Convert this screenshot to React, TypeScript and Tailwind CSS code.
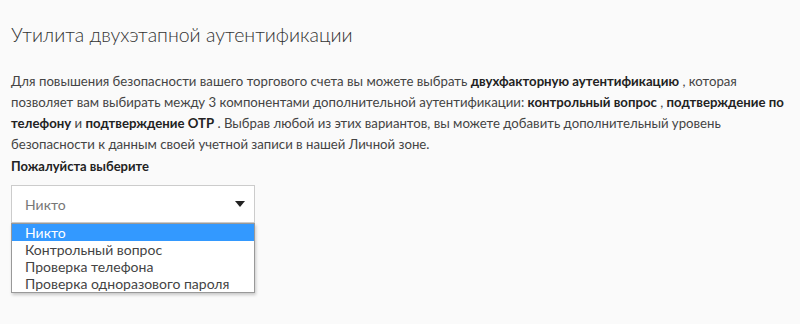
import { useState } from "react";

const options = [
  "Никто",
  "Контрольный вопрос",
  "Проверка телефона",
  "Проверка одноразового пароля",
];

export default function App() {
  const [selected, setSelected] = useState(0);

  return (
    <div className="min-h-[324px] w-[800px] bg-[#fafafa] pl-[11px] pr-[6px] pt-[22px] font-['Lato',sans-serif] text-[#333]">
      <h1 className="text-[19.5px] font-light leading-[26px] text-[#333]">
        Утилита двухэтапной аутентификации
      </h1>

      <p className="mt-[23px] text-[13.2px] leading-[21px] text-[#444]">
        Для повышения безопасности вашего торгового счета вы можете выбрать{" "}
        <b className="font-bold text-[#222]">двухфакторную аутентификацию</b> , которая
        позволяет вам выбирать между 3 компонентами дополнительной аутентификации:{" "}
        <b className="font-bold text-[#222]">контрольный вопрос</b> ,{" "}
        <b className="font-bold text-[#222]">подтверждение по телефону</b> и{" "}
        <b className="font-bold text-[#222]">подтверждение OTP</b> . Выбрав любой из этих
        вариантов, вы можете добавить дополнительный уровень безопасности к данным своей
        учетной записи в нашей Личной зоне.
      </p>

      <div className="mt-[2px] text-[13px] font-bold leading-[18px] text-[#222]">
        Пожалуйста выберите
      </div>

      <div className="relative mt-[10px] w-[244px]">
        <div className="flex h-[38px] items-center justify-between border border-[#ccc] bg-white pl-[13px] pr-[9px] text-[14px] text-[#777]">
          <span>{options[selected]}</span>
          <svg width="10" height="6" viewBox="0 0 10 6" className="text-[#222]">
            <path d="M0 0h10L5 6z" fill="currentColor" />
          </svg>
        </div>

        <ul className="absolute left-0 top-[38px] w-full border border-[#999] bg-white shadow-[1px_2px_3px_rgba(0,0,0,0.2)]">
          {options.map((opt, i) => (
            <li
              key={opt}
              onClick={() => setSelected(i)}
              className={
                i === selected
                  ? "h-[17px] bg-[#3399ff] pl-[13px] text-[14px] leading-[17px] text-white"
                  : "h-[17px] pl-[13px] text-[14px] leading-[17px] text-[#444]"
              }
            >
              {opt}
            </li>
          ))}
        </ul>
      </div>
    </div>
  );
}
